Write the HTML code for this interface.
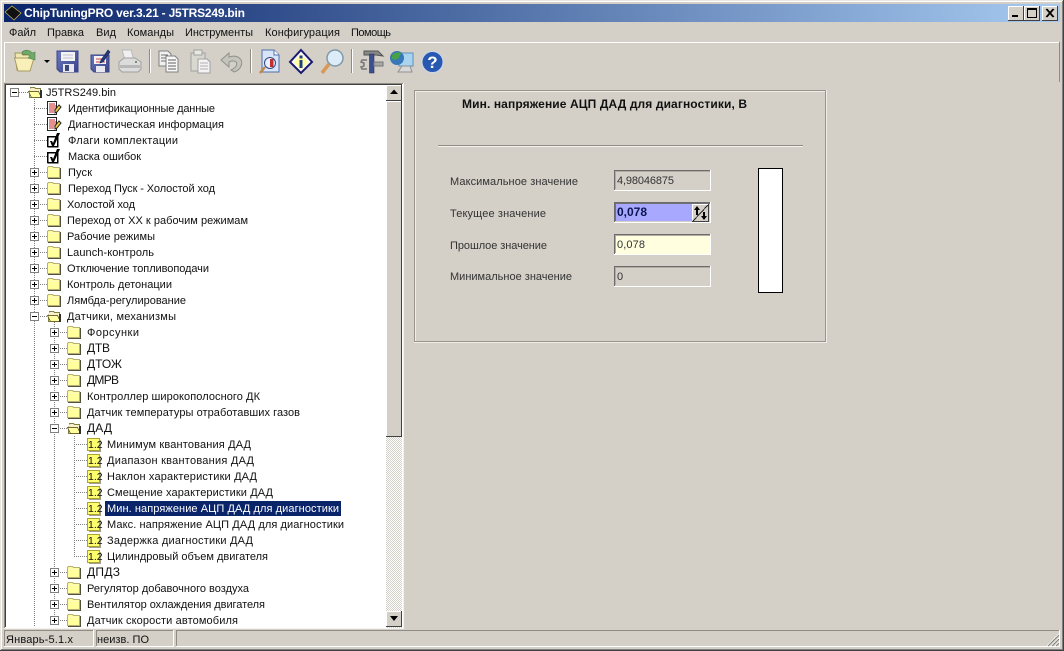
<!DOCTYPE html>
<html><head><meta charset="utf-8"><style>
html,body{margin:0;padding:0;background:#d4d0c8;width:1064px;height:651px;overflow:hidden}
svg{position:absolute;left:0;top:0;display:block}
text{font-family:"Liberation Sans","DejaVu Sans",sans-serif;font-size:11px;fill:#111}
.b{font-weight:bold}
.c{font-size:12px}
.dot{stroke:#808080;stroke-width:1;stroke-dasharray:1 1;fill:none}
</style></head><body>
<svg width="1064" height="651" viewBox="0 0 1064 651" xmlns="http://www.w3.org/2000/svg" shape-rendering="crispEdges">
<defs>
<linearGradient id="tg" x1="0" x2="1" y1="0" y2="0"><stop offset="0" stop-color="#0a246a"/><stop offset="1" stop-color="#a6caf0"/></linearGradient>
<linearGradient id="disk" x1="0" x2="1" y1="0" y2="1"><stop offset="0" stop-color="#6a78c0"/><stop offset="1" stop-color="#3a4488"/></linearGradient>
<pattern id="dith" width="2" height="2" patternUnits="userSpaceOnUse"><rect width="2" height="2" fill="#fff"/><rect width="1" height="1" fill="#d4d0c8"/><rect x="1" y="1" width="1" height="1" fill="#d4d0c8"/></pattern>
<g id="fc"><path d="M0.500 3.500V2.500L1.500 1.500H5.500L6.500 2.500H12.500V12.500H0.500Z" fill="#ffff9c" stroke="#b8b070"/><path d="M1 4.500H12" stroke="#fff8c0"/><path d="M13.500 3V13.500H1" stroke="#505040" fill="none"/></g>
<g id="fo"><path d="M2.500 3.500V2.500H6.500L7.500 3.500H12.500V12.500H1.500V5.500" fill="#f8f0c8" stroke="#808040"/><path d="M0.500 6.500H10.500L13.500 12.500H3.500Z" fill="#ffffa0" stroke="#706830"/><path d="M12 5h2v8h-2z" fill="#303030"/></g>
<g id="pl"><rect x="0.500" y="0.500" width="8" height="8" fill="#fff" stroke="#808080"/><path d="M2 4.500H7M4.500 2V7" stroke="#000"/></g>
<g id="mi"><rect x="0.500" y="0.500" width="8" height="8" fill="#fff" stroke="#808080"/><path d="M2 4.500H7" stroke="#000"/></g>
<g id="doc"><path d="M0.500 1.500H9.500V14.500H0.500Z" fill="#fff" stroke="#222"/><path d="M2 4H8M2 6H9M2 8H9M2 10H8M2 12H7" stroke="#c82020"/><path d="M8 10L12 5L14 7L10 12L8 13Z" fill="#f0d040" stroke="#222" shape-rendering="auto"/></g>
<g id="chk"><rect x="0.500" y="4.500" width="10" height="10" fill="#fff" stroke="#000"/><rect x="1" y="5" width="10" height="10" fill="none" stroke="#000"/><path d="M3 9L5 9L6 11L10 1L13 1L7 14H5Z" fill="#000" shape-rendering="auto"/></g>
<g id="num"><rect x="0.500" y="1.500" width="12" height="12" fill="#ffff70" stroke="#b0a030"/><path d="M13.500 3V14.500H2" stroke="#a0a090" fill="none"/></g>
</defs>

<!-- window chrome -->
<rect width="1064" height="651" fill="#d4d0c8"/>
<path d="M0.500 650V0.500H1063" stroke="#e8e6e0" fill="none"/>
<path d="M1.500 649V1.500H1062" stroke="#fff" fill="none"/>
<path d="M1063.500 0V651M0 650.500H1064" stroke="#404040" fill="none"/>
<path d="M1062.500 1V650M1 649.500H1063" stroke="#808080" fill="none"/>

<!-- title bar -->
<rect x="4" y="4" width="1056" height="18" fill="url(#tg)"/>
<g shape-rendering="auto">
<path d="M5 12L12 6L21 13L14 20Z" fill="#111" stroke="#c8b850" stroke-width=".7"/>
<text x="24" y="17" class="b" style="fill:#fff;font-size:12px" textLength="221" lengthAdjust="spacing">ChipTuningPRO ver.3.21 - J5TRS249.bin</text>
</g>
<!-- caption buttons -->
<g>
<rect x="1008" y="6" width="16" height="14" fill="#d4d0c8"/><path d="M1008.500 20V6.500H1024" stroke="#fff" fill="none"/><path d="M1023.500 6V20.500H1008" stroke="#404040" fill="none"/><rect x="1012" y="15" width="6" height="2" fill="#000"/>
<rect x="1024" y="6" width="16" height="14" fill="#d4d0c8"/><path d="M1024.500 20V6.500H1040" stroke="#fff" fill="none"/><path d="M1039.500 6V20.500H1024" stroke="#404040" fill="none"/><rect x="1027.500" y="8.500" width="9" height="9" fill="none" stroke="#000"/><rect x="1027" y="8" width="10" height="2" fill="#000"/>
<rect x="1042" y="6" width="16" height="14" fill="#d4d0c8"/><path d="M1042.500 20V6.500H1058" stroke="#fff" fill="none"/><path d="M1057.500 6V20.500H1042" stroke="#404040" fill="none"/><path d="M1046 9L1053 17M1047 9L1054 17M1053 9L1046 17M1054 9L1047 17" stroke="#000" shape-rendering="auto"/>
</g>

<!-- menu -->
<g shape-rendering="auto">
<text x="9" y="36" textLength="27" lengthAdjust="spacing">Файл</text>
<text x="47" y="36" textLength="37" lengthAdjust="spacing">Правка</text>
<text x="96" y="36" textLength="20" lengthAdjust="spacing">Вид</text>
<text x="127" y="36" textLength="47" lengthAdjust="spacing">Команды</text>
<text x="185" y="36" textLength="68" lengthAdjust="spacing">Инструменты</text>
<text x="265" y="36" textLength="75" lengthAdjust="spacing">Конфигурация</text>
<text x="351" y="36" textLength="40" lengthAdjust="spacing">Помощь</text>
</g>

<!-- toolbar frame -->
<path d="M4.500 82V42.500H1059" stroke="#fff" fill="none"/>
<path d="M1059.500 42V82" stroke="#908c84" fill="none"/>

<!-- toolbar icons -->
<g shape-rendering="auto">
<!-- open -->
<path d="M15 53H21L23 55H30V70H17Z" fill="#f0e8b0" stroke="#a09858"/>
<path d="M14.500 58H28L34 58L30 71H18Z" fill="#f8f0b8" stroke="#a89c60"/>
<path d="M22 52C26 49 30 50 32 53L35 52V60L28 58L30 56C28 54 25 54 23 55Z" fill="#70a868" stroke="#4a8050" stroke-width=".6"/>
<path d="M44 60H50L47 63Z" fill="#000"/>
<!-- save -->
<path d="M57 51H78V72H60L57 69Z" fill="url(#disk)" stroke="#3a4488"/>
<rect x="61" y="52" width="14" height="9" fill="#f4f4f4"/><path d="M63 55H73M63 58H73" stroke="#c0c0d0"/>
<rect x="63" y="64" width="11" height="8" fill="#e8e8f0"/><rect x="65" y="65" width="4" height="6" fill="#404878"/>
<!-- save as -->
<path d="M91 55H109V72H94L91 69Z" fill="url(#disk)" stroke="#3a4488"/>
<rect x="94" y="56" width="12" height="8" fill="#f4f4f4"/><path d="M96 59H105M96 62H105" stroke="#d04040"/>
<rect x="96" y="66" width="9" height="6" fill="#e8e8f0"/>
<path d="M101 60L108 50L110 52L103 62L100 63Z" fill="#283878" stroke="#182858" stroke-width=".6"/>
<!-- print -->
<path d="M122 50H131L134 60H125Z" fill="#f0f0f0" stroke="#b8b8b8"/>
<path d="M119 62L124 58H135L141 62V69L138 72H122L119 69Z" fill="#dcdcdc" stroke="#a0a0a0"/>
<path d="M120 65H140V68H120Z" fill="#b8b8b8"/><circle cx="136" cy="62" r="1" fill="#607060"/>
<!-- sep -->
<rect x="149" y="49" width="1" height="24" fill="#908c84" shape-rendering="crispEdges"/><rect x="150" y="49" width="1" height="24" fill="#fff" shape-rendering="crispEdges"/>
<!-- copy -->
<path d="M159 51H168L171 54V66H159Z" fill="#f0f0f0" stroke="#808080"/><path d="M161 55H168M161 58H168M161 61H168" stroke="#707070"/>
<path d="M166 56H175L178 59V72H166Z" fill="#f8f8f8" stroke="#808080"/><path d="M168 60H176M168 63H176M168 66H176M168 69H176" stroke="#606060"/>
<!-- paste -->
<path d="M191 53H205V71H191Z" fill="#d8d8d0" stroke="#a0a0a0"/><rect x="194" y="50" width="8" height="5" fill="#e8e8e0" stroke="#a0a0a0"/>
<path d="M198 59H207L210 62V73H198Z" fill="#f4f4f4" stroke="#a0a0a0"/><path d="M200 63H208M200 66H208M200 69H208" stroke="#b0b0b0"/>
<!-- undo -->
<path d="M221 60L229 53V57C238 54 244 60 241 66C240 69 237 71 234 72L231 70C236 68 238 64 236 62C234 60 231 61 229 62V67Z" fill="#c4c4bc" stroke="#909088"/>
<rect x="250" y="49" width="1" height="24" fill="#908c84" shape-rendering="crispEdges"/><rect x="251" y="49" width="1" height="24" fill="#fff" shape-rendering="crispEdges"/>
<!-- doc view -->
<path d="M262 50H274L279 55V72H262Z" fill="#d8e4f8" stroke="#5070a8"/>
<path d="M274 50V55H279" fill="#fff" stroke="#5070a8"/>
<circle cx="270" cy="63" r="5.500" fill="#e8f0ff" stroke="#304880"/><rect x="270" y="59" width="3.500" height="8" fill="#c03030"/>
<path d="M265 67L260 73" stroke="#c08848" stroke-width="2.500"/>
<!-- info -->
<path d="M301 50L312 62L301 73L290 62Z" fill="#f8f8f8" stroke="#1a1a70" stroke-width="2"/>
<path d="M301 54L308 62L301 70L294 62Z" fill="#ffffa0"/>
<rect x="299.500" y="55.500" width="3" height="3" fill="#204080"/><rect x="299.500" y="60" width="3" height="8" fill="#204080"/>
<!-- magnify -->
<circle cx="335" cy="58" r="8" fill="#dcecf8" stroke="#8098a8" stroke-width="1.500"/>
<path d="M329 64L322 73" stroke="#d89858" stroke-width="3.500"/>
<rect x="351" y="49" width="1" height="24" fill="#908c84" shape-rendering="crispEdges"/><rect x="352" y="49" width="1" height="24" fill="#fff" shape-rendering="crispEdges"/>
<!-- tools -->
<path d="M364 51H378L383 56L376 55H364Z" fill="#888" stroke="#555"/>
<rect x="369.500" y="54" width="4.500" height="19" fill="#3a5090" stroke="#303858" stroke-width=".6"/>
<path d="M367 60H362L361 62L364 63V66L361 67L362 69H367" fill="none" stroke="#777" stroke-width="1.500"/>
<rect x="374" y="62" width="9" height="4" fill="#a8a8a8" stroke="#777"/>
<!-- globe -->
<rect x="399" y="53" width="14" height="13" fill="#a8d4f0" stroke="#6090b8"/>
<path d="M402 66H410L412 72H398Z" fill="#d8d8d8" stroke="#909090"/>
<circle cx="397" cy="58" r="7" fill="#3878b8"/><path d="M392 55C395 52 398 52 401 53L399 58L395 60L392 59Z" fill="#48a048"/>
<!-- help -->
<circle cx="432.500" cy="62" r="10.500" fill="#2858b0" stroke="#c8d8f0" stroke-width="1"/>
<text x="432.500" y="68" text-anchor="middle" class="b" style="font-size:17px;fill:#fff">?</text>
</g>

<!-- tree frame -->
<rect x="4" y="83" width="399" height="545" fill="#fff"/>
<path d="M4.500 628V83.500H403" stroke="#908c84" fill="none"/>
<path d="M5.500 627V84.500H402" stroke="#404040" fill="none"/>
<path d="M403.500 83V628M4 628.500H404" stroke="#f4f2ee" fill="none"/>

<!-- scrollbar -->
<rect x="386" y="85" width="16" height="543" fill="url(#dith)"/>
<rect x="386" y="85" width="16" height="15" fill="#d4d0c8"/><path d="M386.500 100V85.500H402" stroke="#fff" fill="none"/><path d="M401.500 85V100.500H386" stroke="#404040" fill="none"/><path d="M394 89.500L398 94H390Z" fill="#000" shape-rendering="auto"/>
<rect x="386" y="101" width="16" height="335" fill="#d4d0c8"/><path d="M386.500 436V101.500H402" stroke="#fff" fill="none"/><path d="M401.500 101V436.500H386" stroke="#404040" fill="none"/>
<rect x="386" y="611" width="16" height="15" fill="#d4d0c8"/><path d="M386.500 626V611.500H402" stroke="#fff" fill="none"/><path d="M401.500 611V626.500H386" stroke="#404040" fill="none"/><path d="M390 616H398L394 621Z" fill="#000" shape-rendering="auto"/>

<!-- tree lines -->
<path class="dot" d="M34.500 97V626M15 92.500H28M34 108.500H47M34 124.500H47M34 140.500H47M34 156.500H47M38 172.500H47M38 188.500H47M38 204.500H47M38 220.500H47M38 236.500H47M38 252.500H47M38 268.500H47M38 284.500H47M38 300.500H47M38 316.500H47"/>
<path class="dot" d="M54.500 322V626M58 332.500H67M58 348.500H67M58 364.500H67M58 380.500H67M58 396.500H67M58 412.500H67M58 428.500H67M58 572.500H67M58 588.500H67M58 604.500H67M58 620.500H67"/>
<path class="dot" d="M74.500 436V556M74 444.500H87M74 460.500H87M74 476.500H87M74 492.500H87M74 508.500H87M74 524.500H87M74 540.500H87M74 556.500H87"/>

<!-- expanders -->
<use href="#mi" x="10" y="88"/>
<use href="#pl" x="30" y="168"/><use href="#pl" x="30" y="184"/><use href="#pl" x="30" y="200"/><use href="#pl" x="30" y="216"/><use href="#pl" x="30" y="232"/><use href="#pl" x="30" y="248"/><use href="#pl" x="30" y="264"/><use href="#pl" x="30" y="280"/><use href="#pl" x="30" y="296"/><use href="#mi" x="30" y="312"/>
<use href="#pl" x="50" y="328"/><use href="#pl" x="50" y="344"/><use href="#pl" x="50" y="360"/><use href="#pl" x="50" y="376"/><use href="#pl" x="50" y="392"/><use href="#pl" x="50" y="408"/><use href="#mi" x="50" y="424"/><use href="#pl" x="50" y="568"/><use href="#pl" x="50" y="584"/><use href="#pl" x="50" y="600"/><use href="#pl" x="50" y="616"/>

<!-- icons -->
<use href="#fo" x="28" y="85"/>
<use href="#doc" x="47" y="100"/><use href="#doc" x="47" y="116"/><use href="#chk" x="47" y="132"/><use href="#chk" x="47" y="148"/>
<use href="#fc" x="47" y="165"/><use href="#fc" x="47" y="181"/><use href="#fc" x="47" y="197"/><use href="#fc" x="47" y="213"/><use href="#fc" x="47" y="229"/><use href="#fc" x="47" y="245"/><use href="#fc" x="47" y="261"/><use href="#fc" x="47" y="277"/><use href="#fc" x="47" y="293"/><use href="#fo" x="47" y="309"/>
<use href="#fc" x="67" y="325"/><use href="#fc" x="67" y="341"/><use href="#fc" x="67" y="357"/><use href="#fc" x="67" y="373"/><use href="#fc" x="67" y="389"/><use href="#fc" x="67" y="405"/><use href="#fo" x="67" y="421"/><use href="#fc" x="67" y="565"/><use href="#fc" x="67" y="581"/><use href="#fc" x="67" y="597"/><use href="#fc" x="67" y="613"/>
<use href="#num" x="87" y="437"/><use href="#num" x="87" y="453"/><use href="#num" x="87" y="469"/><use href="#num" x="87" y="485"/><use href="#num" x="87" y="501"/><use href="#num" x="87" y="517"/><use href="#num" x="87" y="533"/><use href="#num" x="87" y="549"/>

<!-- selection -->
<rect x="105" y="501" width="236" height="15" fill="#0a246a"/>

<g shape-rendering="auto">
<text x="88" y="448" style="font-size:10.500px">1.2</text><text x="88" y="464" style="font-size:10.500px">1.2</text><text x="88" y="480" style="font-size:10.500px">1.2</text><text x="88" y="496" style="font-size:10.500px">1.2</text><text x="88" y="512" style="font-size:10.500px">1.2</text><text x="88" y="528" style="font-size:10.500px">1.2</text><text x="88" y="544" style="font-size:10.500px">1.2</text><text x="88" y="560" style="font-size:10.500px">1.2</text>
<text x="46" y="96" textLength="70" lengthAdjust="spacing">J5TRS249.bin</text>
<text x="68" y="112" textLength="147" lengthAdjust="spacing">Идентификационные данные</text>
<text x="68" y="128" textLength="156" lengthAdjust="spacing">Диагностическая информация</text>
<text x="68" y="144" textLength="110" lengthAdjust="spacing">Флаги комплектации</text>
<text x="68" y="160" textLength="73" lengthAdjust="spacing">Маска ошибок</text>
<text x="68" y="176" textLength="24" lengthAdjust="spacing">Пуск</text>
<text x="68" y="192" textLength="147" lengthAdjust="spacing">Переход Пуск - Холостой ход</text>
<text x="67" y="208" textLength="68" lengthAdjust="spacing">Холостой ход</text>
<text x="67" y="224" textLength="181" lengthAdjust="spacing">Переход от ХХ к рабочим режимам</text>
<text x="67" y="240" textLength="88" lengthAdjust="spacing">Рабочие режимы</text>
<text x="67" y="256" textLength="87" lengthAdjust="spacing">Launch-контроль</text>
<text x="67" y="272" textLength="142" lengthAdjust="spacing">Отключение топливоподачи</text>
<text x="67" y="288" textLength="105" lengthAdjust="spacing">Контроль детонации</text>
<text x="67" y="304" textLength="119" lengthAdjust="spacing">Лямбда-регулирование</text>
<text x="67" y="320" textLength="109" lengthAdjust="spacing">Датчики, механизмы</text>
<text x="87" y="336" textLength="52" lengthAdjust="spacing">Форсунки</text>
<text x="87" y="352" class="c" textLength="23" lengthAdjust="spacing">ДТВ</text>
<text x="87" y="368" class="c" textLength="35" lengthAdjust="spacing">ДТОЖ</text>
<text x="87" y="384" class="c" textLength="32" lengthAdjust="spacing">ДМРВ</text>
<text x="87" y="400" textLength="173" lengthAdjust="spacing">Контроллер широкополосного ДК</text>
<text x="87" y="416" textLength="213" lengthAdjust="spacing">Датчик температуры отработавших газов</text>
<text x="87" y="432" class="c" textLength="25" lengthAdjust="spacing">ДАД</text>
<text x="107" y="448" textLength="144" lengthAdjust="spacing">Минимум квантования ДАД</text>
<text x="107" y="464" textLength="147" lengthAdjust="spacing">Диапазон квантования ДАД</text>
<text x="107" y="480" textLength="150" lengthAdjust="spacing">Наклон характеристики ДАД</text>
<text x="107" y="496" textLength="166" lengthAdjust="spacing">Смещение характеристики ДАД</text>
<text x="107" y="512" textLength="232" lengthAdjust="spacing" style="fill:#fff">Мин. напряжение АЦП ДАД для диагностики</text>
<text x="107" y="528" textLength="237" lengthAdjust="spacing">Макс. напряжение АЦП ДАД для диагностики</text>
<text x="107" y="544" textLength="146" lengthAdjust="spacing">Задержка диагностики ДАД</text>
<text x="107" y="560" textLength="161" lengthAdjust="spacing">Цилиндровый объем двигателя</text>
<text x="87" y="576" class="c" textLength="33" lengthAdjust="spacing">ДПДЗ</text>
<text x="87" y="592" textLength="162" lengthAdjust="spacing">Регулятор добавочного воздуха</text>
<text x="87" y="608" textLength="178" lengthAdjust="spacing">Вентилятор охлаждения двигателя</text>
<text x="87" y="624" textLength="151" lengthAdjust="spacing">Датчик скорости автомобиля</text>
</g>

<!-- right panel -->
<rect x="414.500" y="90.500" width="411" height="251" fill="none" stroke="#98948c"/>
<path d="M415.500 341V91.500H825M414 342.500H827M826.500 90V343" stroke="#f0eee8" fill="none"/>
<rect x="438" y="145" width="365" height="1" fill="#908c84"/><rect x="438" y="146" width="365" height="1" fill="#f4f2ee"/>
<g shape-rendering="auto">
<text x="462" y="108" class="b" style="font-size:12px" textLength="285" lengthAdjust="spacing">Мин. напряжение АЦП ДАД для диагностики, В</text>
<text x="450" y="185" textLength="128" lengthAdjust="spacing" style="fill:#333">Максимальное значение</text>
<text x="450" y="217" textLength="96" lengthAdjust="spacing" style="fill:#333">Текущее значение</text>
<text x="450" y="249" textLength="97" lengthAdjust="spacing" style="fill:#333">Прошлое значение</text>
<text x="450" y="280" textLength="122" lengthAdjust="spacing" style="fill:#333">Минимальное значение</text>
</g>
<!-- fields -->
<g>
<rect x="614" y="170" width="97" height="21" fill="#d4d0c8"/><path d="M614.500 190V170.500H711" stroke="#6c6c6c" fill="none"/><path d="M615.500 189V171.500H710" stroke="#b0aca4" fill="none"/><path d="M710.500 170V190.500H614" stroke="#fff" fill="none"/>
<rect x="614" y="202" width="97" height="21" fill="#d4d0c8"/><rect x="616" y="204" width="76" height="17" fill="#a8a8ff"/><path d="M614.500 222V202.500H711" stroke="#6c6c6c" fill="none"/><path d="M615.500 221V203.500H710" stroke="#707070" fill="none"/><path d="M710.500 202V222.500H614" stroke="#fff" fill="none"/>
<path d="M692.500 221V204.500H709" stroke="#fff" fill="none"/><path d="M708.500 204V221.500H692" stroke="#404040" fill="none"/><path d="M693 221L708 205" stroke="#222"/>
<path d="M697 206L700 210H698V215H696V210H694Z" fill="#000" shape-rendering="auto"/><path d="M704 220L701 216H703V212H705V216H707Z" fill="#000" shape-rendering="auto"/>
<rect x="614" y="234" width="97" height="21" fill="#ffffe0"/><path d="M614.500 254V234.500H711" stroke="#6c6c6c" fill="none"/><path d="M615.500 253V235.500H710" stroke="#b0aca4" fill="none"/><path d="M710.500 234V254.500H614" stroke="#fff" fill="none"/>
<rect x="614" y="266" width="97" height="21" fill="#d4d0c8"/><path d="M614.500 286V266.500H711" stroke="#6c6c6c" fill="none"/><path d="M615.500 285V267.500H710" stroke="#b0aca4" fill="none"/><path d="M710.500 266V286.500H614" stroke="#fff" fill="none"/>
</g>
<g shape-rendering="auto">
<text x="617" y="184" textLength="57" lengthAdjust="spacing" style="fill:#333">4,98046875</text>
<text x="617" y="216" class="b" style="font-size:12px;fill:#0a1450">0,078</text>
<text x="617" y="248" textLength="28" lengthAdjust="spacing" style="fill:#333">0,078</text>
<text x="617" y="280" style="fill:#333">0</text>
</g>
<rect x="758.500" y="168.500" width="24" height="124" fill="#fff" stroke="#000"/>

<!-- status bar -->
<g>
<path d="M4.500 646V630.500H94" stroke="#908c84" fill="none"/><path d="M93.500 630V646.500H4" stroke="#fff" fill="none"/>
<path d="M96.500 646V630.500H174" stroke="#908c84" fill="none"/><path d="M173.500 630V646.500H96" stroke="#fff" fill="none"/>
<path d="M176.500 646V630.500H1060" stroke="#908c84" fill="none"/><path d="M1059.500 630V646.500H176" stroke="#fff" fill="none"/>
</g>
<g shape-rendering="auto">
<text x="6" y="643" textLength="67" lengthAdjust="spacing">Январь-5.1.x</text>
<text x="97" y="643" textLength="52" lengthAdjust="spacing">неизв. ПО</text>
<path d="M1047 646L1059 634M1051 646L1059 638M1055 646L1059 642" stroke="#fff" stroke-width="1"/>
<path d="M1048 646L1059 635M1052 646L1059 639M1056 646L1059 643" stroke="#808080" stroke-width="1"/>
</g>
</svg>
</body></html>
